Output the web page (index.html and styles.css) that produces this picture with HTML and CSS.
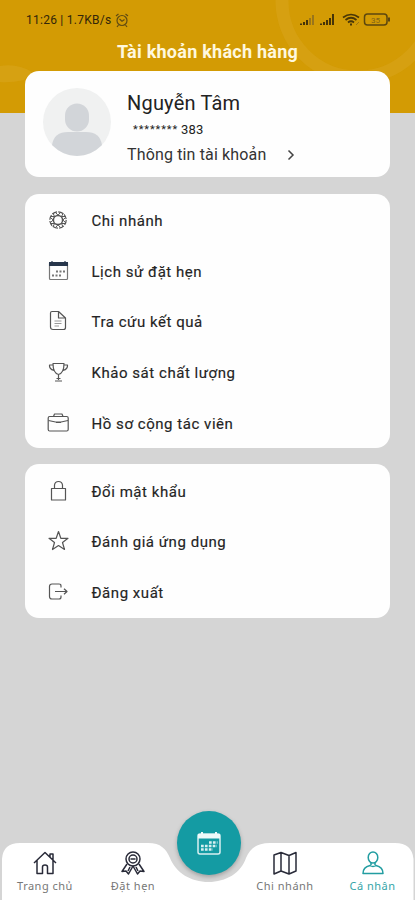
FILE: index.html
```html
<!DOCTYPE html>
<html lang="vi">
<head>
<meta charset="utf-8">
<title>Tài khoản khách hàng</title>
<link rel="stylesheet" href="styles.css">
</head>
<body>
<div class="screen">
  <header class="header">
    <svg class="header-art" viewBox="0 0 415 113" aria-hidden="true">
      <circle cx="358" cy="1" r="76" fill="none" stroke="#d9a51d" stroke-width="13" opacity=".5"/>
      <path d="M0 66Q17 63 32 72L24 80Q10 83 0 82Z" fill="#d9a51d" opacity=".6"/>
    </svg>
    <div class="status">
      <span class="status-time">11:26 | 1.7KB/s</span>
      <svg class="alarm" width="14" height="15" viewBox="0 0 14 15" fill="none" stroke="#604b13" stroke-width="1.2"><circle cx="7" cy="7.5" r="5"/><path d="M1 3L3.5 1M10.500 1L13 3M3.500 12L2 14M10.500 12L12 14M4.500 6L7 8.200L9.500 6.500"/></svg>
      <svg class="signals" width="92" height="16" viewBox="0 0 92 16" fill="none">
        <g stroke-width="2"><path d="M2 13V11.500M5 13V10M8 13V8" stroke="#463408"/><path d="M11 13V6M14 13V3" stroke="#99751b"/><path d="M22 13V11.500M25 13V10M28 13V8M31 13V6M34 13V2" stroke="#463408"/></g>
        <g stroke="#493708" stroke-width="1.700"><path d="M44 5.500Q52 -.5 60 5.500M46.500 8Q52 3.500 57.500 8M49 10.500Q52 8 55 10.500"/><path d="M51 12.500H53" stroke-width="2"/></g>
        <path d="M57 13L60 10" stroke="#9d7415"/>
        <rect x="65.500" y="2" width="22.500" height="11" rx="3" stroke="#5c470f" stroke-width="1.500"/><path d="M90 5.500V9.500" stroke="#5c470f" stroke-width="2"/>
        <text x="76.500" y="10.500" class="battery-text">35</text>
      </svg>
    </div>
    <h1 class="title">Tài khoản khách hàng</h1>
  </header>

  <main class="content">
    <section class="card profile">
      <svg class="avatar" width="68" height="68" viewBox="0 0 68 68"><circle cx="34" cy="34" r="34" fill="#f0f1f1"/><rect x="22" y="15.500" width="24" height="28" rx="12" fill="#d2d5d9"/><path d="M9 57Q11 44 25 44H43Q57 44 59 57Q48 68 34 68T9 57Z" fill="#d2d5d9"/></svg>
      <div class="profile-info">
        <div class="name">Nguyễn Tâm</div>
        <div class="phone"><span class="stars">********</span><span>383</span></div>
        <div class="account"><span>Thông tin tài khoản</span><svg width="8" height="12" viewBox="0 0 8 12" fill="none" stroke="#444" stroke-width="1.500"><path d="M1.500 1.500L6 6L1.500 10.500"/></svg></div>
      </div>
    </section>

    <section class="card menu">
      <div class="row"><svg class="icon" viewBox="0 0 22 22"><circle cx="11" cy="11" r="8.200" stroke-dasharray="5.200 1.240"/><circle cx="11" cy="11" r="4.600" stroke-width="1.500"/><path d="M8.500 3.500L11 6.200L13.500 3.500M16.300 4L14.500 7.500L18.200 7.500M18.500 8.500L15.800 11L18.500 13.500M18 14.500L14.500 14.500L16 18M13.500 18.500L11 15.800L8.500 18.500M6 18L7.500 14.500L4 14.500M3.500 13.500L6.200 11L3.500 8.500M4 7.500L7.500 7.500L6 4" stroke-width="1"/></svg><span>Chi nhánh</span></div>
      <div class="row"><svg class="icon" viewBox="0 0 22 22"><rect x="2.500" y="2.500" width="18" height="17" rx="1" stroke="#777"/><path d="M2 4H21" stroke="#27364b" stroke-width="4"/><path d="M5 1V4M18 1V4" stroke="#27364b"/><path d="M9 11.500H18M5 15.500H14" stroke-dasharray="2 1.500" stroke-width="1.800" stroke="#777"/></svg><span>Lịch sử đặt hẹn</span></div>
      <div class="row"><svg class="icon" viewBox="0 0 22 22"><path d="M5 1.500H11.500L18.500 8V17.500Q18.500 19.500 16.500 19.500H6Q3.500 19.500 3.500 17V3Q3.500 1.500 5 1.500ZM11.500 1.500V8H18.500"/><path d="M7.500 11H14.500M7.500 13.500H14.500M7.500 16H12" stroke="#999"/></svg><span>Tra cứu kết quả</span></div>
      <div class="row"><svg class="icon" viewBox="0 0 22 22"><path d="M6 2.500H17Q17 12 11.500 13.500Q6 12 6 2.500ZM6 4H2.500Q2 8 7 9.500M17 4H20.500Q21 8 16 9.500M11.500 13.500V19M8 20H15M9.500 17.500H13.500"/></svg><span>Khảo sát chất lượng</span></div>
      <div class="row"><svg class="icon" viewBox="0 0 22 22"><rect x="1.200" y="4.500" width="20" height="14.500" rx="1.500"/><path d="M6.500 4.500L7.500 2H15L16 4.500M1.500 8.500L8.500 10H14L21 8.500M9 10.500H14"/></svg><span>Hồ sơ cộng tác viên</span></div>
    </section>

    <section class="card menu">
      <div class="row"><svg class="icon" viewBox="0 0 22 22"><path d="M4.500 8.500H18.500V20H4.500ZM7.500 8.500V5Q8 1.500 11.500 1.500T15.500 5V8.500"/></svg><span>Đổi mật khẩu</span></div>
      <div class="row"><svg class="icon" viewBox="0 0 22 22"><path d="M11.500 1.500L13.800 8.300H21L15.500 12.500L17.500 19.500L11.500 15.500L5.500 19.500L7.500 12.500L2 8.300H9.200Z"/></svg><span>Đánh giá ứng dụng</span></div>
      <div class="row"><svg class="icon" viewBox="0 0 22 22"><path d="M14 6.500V5Q14 3 12 3H5Q2.500 3 2.500 5.500V15.500Q2.500 18 5 18H12Q14 18 14 16V14.500M8 10.500H20M17 7.700L20 10.500L17 13.300"/></svg><span>Đăng xuất</span></div>
    </section>
  </main>

  <nav class="nav">
    <svg class="nav-bg" viewBox="0 0 415 57" aria-hidden="true"><path d="M2 57V16Q3 0 20 0H148C161 0 166 6 170 15C176 30 191 39 208.500 39C226 39 241 30 246 15C250 6 256 0 270 0H395Q412 0 413.500 16V57Z" fill="#fff"/></svg>
    <a class="tab"><svg class="tab-icon" viewBox="0 0 24 24"><path d="M1 12L12 1.500L23 12M4 9.500V22.500H9.500V16Q9.500 14 12 14T14.500 16V22.500H20V9.500M17 6V3H20V9"/></svg><span>Trang chủ</span></a>
    <a class="tab"><svg class="tab-icon" viewBox="0 0 24 24"><circle cx="12" cy="8" r="7"/><circle cx="12" cy="8" r="4"/><path d="M9.500 8H14.500M6 13L1 20.500L5 20L7.500 23L12 15L16.500 23L19 20L23 20.500L18 13M9 16L7 20M15 16L17 20"/></svg><span>Đặt hẹn</span></a>
    <a class="fab"><svg width="24" height="24" viewBox="0 0 24 24"><rect x="1" y="3" width="22" height="20" rx="2" fill="none" stroke="#d8f0f1" stroke-width="1.500"/><path d="M1 3H23V7.500H1ZM4 1H6V4H4ZM18 1H20V4H18Z" fill="#eefafa"/><path d="M12 11.500H20.500M4 15H20M4 18.500H16" fill="none" stroke="#d8f0f1" stroke-width="2.300" stroke-dasharray="2.700 1.200"/></svg></a>
    <a class="tab"><svg class="tab-icon" viewBox="0 0 24 24"><path d="M1 4L8 1.500L16 4.500L23 1.500V20L16 23L8 20L1 23ZM8 1.500V20M16 4.500V23"/></svg><span>Chi nhánh</span></a>
    <a class="tab active"><svg class="tab-icon" viewBox="0 0 24 24"><ellipse cx="12" cy="6.500" rx="4.800" ry="5.500"/><path d="M9 14.500Q2 16 2 22.500H22Q22 16 15 14.500Q12 16.500 9 14.500ZM10 12V14M14 12V14"/></svg><span>Cá nhân</span></a>
  </nav>
</div>
</body>
</html>
```
FILE: styles.css
```css
* { box-sizing: border-box; }
body { margin: 0; background: #d5d5d5; font-family: Roboto, "Noto Sans", sans-serif; color: #222; }
.screen { width: 415px; height: 900px; display: flex; flex-direction: column; overflow: hidden; }
.header { height: 113px; flex: none; background: #d39b04; position: relative; }
.header-art { position: absolute; inset: 0; width: 415px; height: 113px; }
.status { position: relative; height: 39px; padding: 1px 24px 0 26px; display: flex; align-items: center; }
.status-time { width: 87px; font-size: 12px; letter-spacing: .25px; color: #32260a; white-space: nowrap; }
.alarm { margin-left: 2px; }
.signals { margin-left: auto; }
.battery-text { font-size: 8px; fill: #81631a; text-anchor: middle; }
.title { position: relative; margin: 0; text-align: center; font-size: 18px; line-height: 26px; font-weight: 700; letter-spacing: .25px; color: #fff8df; }
.content { flex: 1; margin: -42px 25px 0; position: relative; display: flex; flex-direction: column; gap: 16.500px; }
.card { background: #fefefe; border-radius: 14px; }
.profile { height: 106px; padding: 17px 17px 0 17.500px; display: flex; gap: 16.500px; }
.avatar { flex: none; }
.profile-info { flex: 1; }
.name { font-size: 20px; line-height: 30px; letter-spacing: .2px; white-space: nowrap; }
.phone { display: flex; gap: 3px; height: 24px; padding-left: 6px; font-size: 13px; line-height: 24px; letter-spacing: .2px; }
.stars { font-size: 11px; letter-spacing: .9px; line-height: 23px; }
.account { display: flex; align-items: center; gap: 21px; font-size: 16px; line-height: 26px; letter-spacing: .15px; color: #333; }
.menu { padding-top: 1px; }
.row { height: 50.700px; display: flex; align-items: center; gap: 22.500px; padding-left: 22px; font-size: 15px; letter-spacing: .54px; color: #242424; -webkit-text-stroke: .15px #242424; }
.row span { padding-top: 2px; }
.icon { width: 22px; height: 22px; flex: none; fill: none; stroke: #555; stroke-width: 1.200; stroke-linejoin: round; }
.nav { height: 57px; flex: none; position: relative; display: grid; grid-template-columns: 88px 88px 64px 88px 87px; padding-left: .5px; }
.nav-bg { position: absolute; inset: 0; width: 415px; height: 57px; }
.tab { position: relative; display: flex; flex-direction: column; align-items: center; padding: 8px 0 0 1px; font-family: "Noto Sans", sans-serif; font-size: 11px; letter-spacing: .5px; line-height: 16px; color: #777; white-space: nowrap; }
.tab-icon { width: 24px; height: 24px; margin-bottom: 3px; fill: none; stroke: #292b39; stroke-width: 1.500; stroke-linejoin: round; }
.active { color: #35a5a8; }
.active .tab-icon { stroke: #229da1; }
.fab { position: relative; width: 64px; height: 64px; margin-top: -32.500px; border-radius: 50%; background: #149ba3; display: flex; align-items: center; justify-content: center; box-shadow: 0 2px 4px rgba(0, 0, 0, .25); }
```
